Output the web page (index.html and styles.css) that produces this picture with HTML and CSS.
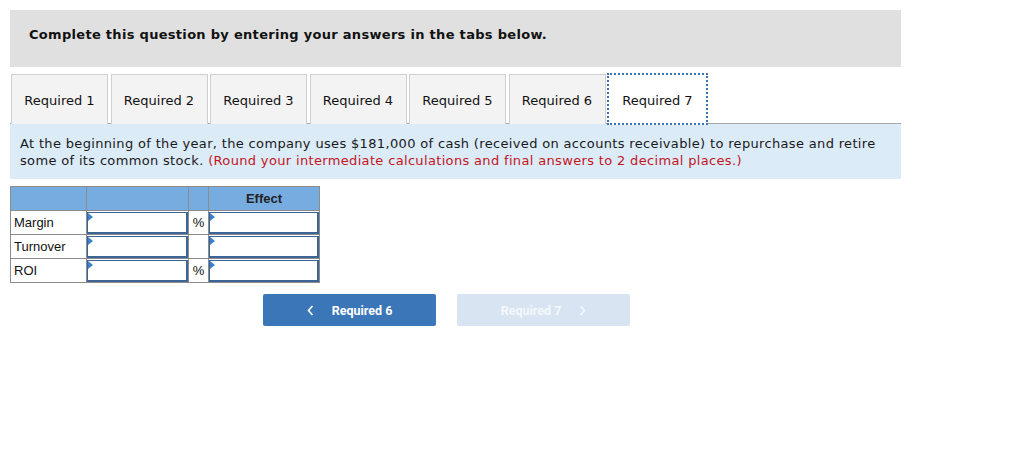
FILE: index.html
```html
<!DOCTYPE html>
<html>
<head>
<meta charset="utf-8">
<link rel="stylesheet" href="styles.css">
</head>
<body>
<div class="page">
  <div class="banner">Complete this question by entering your answers in the tabs below.</div>
  <div class="tabs">
    <div class="tab">Required 1</div>
    <div class="tab">Required 2</div>
    <div class="tab">Required 3</div>
    <div class="tab">Required 4</div>
    <div class="tab">Required 5</div>
    <div class="tab">Required 6</div>
    <div class="tab active">Required 7</div>
  </div>
  <div class="info">At the beginning of the year, the company uses $181,000 of cash (received on accounts receivable) to repurchase and retire some of its common stock. <span class="red">(Round your intermediate calculations and final answers to 2 decimal places.)</span></div>
  <table class="grid">
    <tr class="head">
      <th class="c-label"></th>
      <th class="c-val"></th>
      <th class="c-pct"></th>
      <th class="c-eff">Effect</th>
    </tr>
    <tr>
      <td class="c-label">Margin</td>
      <td class="c-val inp"><div class="box"><span class="flag"></span></div></td>
      <td class="c-pct">%</td>
      <td class="c-eff inp"><div class="box"><span class="flag"></span></div></td>
    </tr>
    <tr>
      <td class="c-label">Turnover</td>
      <td class="c-val inp"><div class="box"><span class="flag"></span></div></td>
      <td class="c-pct"></td>
      <td class="c-eff inp"><div class="box"><span class="flag"></span></div></td>
    </tr>
    <tr>
      <td class="c-label">ROI</td>
      <td class="c-val inp"><div class="box"><span class="flag"></span></div></td>
      <td class="c-pct">%</td>
      <td class="c-eff inp"><div class="box"><span class="flag"></span></div></td>
    </tr>
  </table>
  <div class="nav">
    <div class="btn prev"><svg class="chev" width="7" height="11" viewBox="0 0 7 11"><polyline points="5.5,1 1.5,5.5 5.5,10" fill="none" stroke="currentColor" stroke-width="1.6"/></svg>Required 6</div>
    <div class="btn next">Required 7<svg class="chev" width="7" height="11" viewBox="0 0 7 11"><polyline points="1.5,1 5.5,5.5 1.5,10" fill="none" stroke="currentColor" stroke-width="1.6"/></svg></div>
  </div>
</div>
</body>
</html>
```
FILE: styles.css
```css
* { box-sizing: border-box; }
html, body { margin: 0; padding: 0; background: #fff; }
body { font-family: "DejaVu Sans", Verdana, sans-serif; color: #111; }
.page { padding: 10px 0 0 10px; width: 901px; }
.banner {
  background: #e0e0e0;
  height: 57px;
  padding: 16px 0 0 19px;
  font-weight: bold;
  font-size: 13px;
  line-height: 17px;
  letter-spacing: 0.3px;
}
.tabs {
  display: flex;
  gap: 2.5px;
  margin-top: 7px;
  padding-left: 1px;
  height: 50px;
  border-bottom: 1px solid #a8a8a8;
}
.tab {
  width: 97px;
  height: 50px;
  background: #f3f3f3;
  border: 1px solid #cfcfcf;
  border-bottom: none;
  font-size: 13px;
  display: flex;
  align-items: center;
  justify-content: center;
  padding-top: 2px;
}
.tab.active {
  background: #fff;
  border: 2px dotted #3a72b8;
  height: 52px;
  width: 101px;
  margin-top: -1px;
  margin-left: -1px;
  position: relative;
  z-index: 1;
}
.info {
  background: #dbebf8;
  height: 55px;
  padding: 11px 10px 0 10px;
  font-size: 13px;
  line-height: 17px;
  letter-spacing: 0.34px;
  color: #1a1a1a;
}
.red { color: #c3161c; }
.grid {
  margin-top: 7px;
  border-collapse: collapse;
  font-family: "Liberation Sans", Arial, sans-serif;
  font-size: 13px;
  border: 1px solid #8c8c8c;
}
.grid th, .grid td {
  border: 1px solid #8c8c8c;
  height: 24px;
  padding: 0;
}
.grid .head th {
  background: #77ace1;
  font-weight: bold;
  color: #222;
  text-align: center;
  height: 24px;
}
.c-label { width: 76px; text-align: left; padding-left: 3px !important; }
.c-val { width: 102px; }
.c-pct { width: 20px; text-align: center; }
.c-eff { width: 111px; }
td.inp { position: relative; }
.box {
  height: 22px;
  border: 2px solid #3c6595;
  border-top-width: 1px;
  border-left-width: 1px;
  background: #fff;
  position: relative;
}
.flag {
  position: absolute;
  left: 0;
  top: 0;
  width: 0;
  height: 0;
  border-top: 4px solid transparent;
  border-bottom: 4px solid transparent;
  border-left: 5px solid #3c7fd0;
}
.nav {
  display: flex;
  gap: 21px;
  margin-top: 11px;
  padding-left: 253px;
}
.btn {
  width: 173px;
  height: 32px;
  border-radius: 2px;
  font-family: Roboto, "Liberation Sans", sans-serif;
  font-weight: bold;
  font-size: 12.5px;
  display: flex;
  align-items: center;
  justify-content: center;
  color: #fff;
}
.btn.prev { background: #3a76b8; }
.btn.next { background: #d8e4f1; color: #f4f8fc; }
.chev { display: block; }
.prev .chev { margin-right: 18px; }
.next .chev { margin-left: 18px; }
```
